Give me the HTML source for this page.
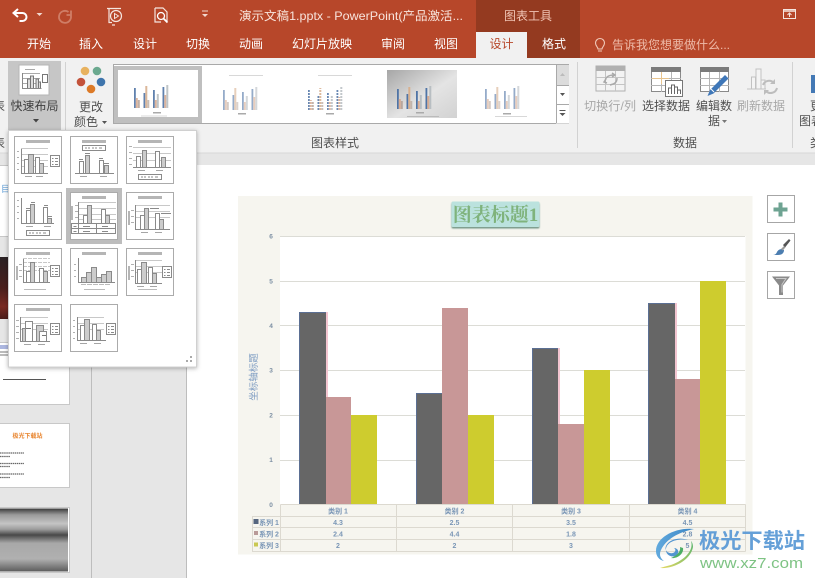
<!DOCTYPE html>
<html lang="zh"><head><meta charset="utf-8"><title>PowerPoint</title>
<style>
html,body{margin:0;padding:0;background:#fff}
body{width:815px;height:578px;overflow:hidden}
svg{display:block}
text{font-family:"Liberation Sans","Noto Sans CJK SC",sans-serif}
.t{font-size:12px;fill:#fff;text-anchor:middle}
.r{font-size:12px;fill:#505050;text-anchor:middle}
.g{font-size:12px;fill:#a8a8a8;text-anchor:middle}
.n{font-size:6.5px;fill:#7b8ea2;font-weight:bold;text-anchor:middle}
.c{font-size:7px;fill:#7a96b6;text-anchor:middle;font-weight:bold}
</style></head><body>
<svg width="815" height="578" viewBox="0 0 815 578" xmlns="http://www.w3.org/2000/svg">
<defs>
<linearGradient id="img4" x1="0" y1="0" x2="1" y2="1"><stop offset="0" stop-color="#a6a6a6"/><stop offset=".55" stop-color="#e4e4e4"/><stop offset="1" stop-color="#d2d2d2"/></linearGradient>
<linearGradient id="gr" x1="0" y1="0" x2="0" y2="1"><stop offset="0" stop-color="#3a3a3a"/><stop offset=".1" stop-color="#9a9a9a"/><stop offset=".24" stop-color="#c4c4c4"/><stop offset=".33" stop-color="#9c9c9c"/><stop offset=".42" stop-color="#484848"/><stop offset=".55" stop-color="#a8a8a8"/><stop offset=".8" stop-color="#b0b0b0"/><stop offset="1" stop-color="#5c5c5c"/></linearGradient>
<linearGradient id="dk" x1="0" y1="0" x2="0" y2="1"><stop offset="0" stop-color="#2a2224"/><stop offset=".5" stop-color="#4a1f1c"/><stop offset=".8" stop-color="#7a2a22"/><stop offset="1" stop-color="#4a1d1a"/></linearGradient>
<linearGradient id="sb" x1="0" y1="0" x2="1" y2="0"><stop offset="0" stop-color="#5aa6dc"/><stop offset="1" stop-color="#2f7fc4"/></linearGradient>
<linearGradient id="sg" x1="0" y1="1" x2="1" y2="0"><stop offset="0" stop-color="#e3d75a"/><stop offset="1" stop-color="#4fb26a"/></linearGradient>
<filter id="sh" x="-10%" y="-10%" width="120%" height="120%"><feDropShadow dx="0" dy="1" stdDeviation="2" flood-color="#000" flood-opacity=".3"/></filter>
<filter id="sh2" x="-10%" y="-20%" width="120%" height="150%"><feDropShadow dx="0" dy="1.5" stdDeviation=".8" flood-color="#3c6e5c" flood-opacity=".7"/></filter>

<g id="tf"><rect x=".5" y=".5" width="47" height="47" fill="#fff" stroke="#ababab"/></g>
<g id="ttl"><rect x="12" y="4" width="24" height="3" fill="#b5b5b5"/></g>
<g id="leg"><rect x="36.500" y="19.500" width="9" height="11" fill="#fff" stroke="#8a8a8a"/><path d="M38 22.500h1.500M41 22.500h3M38 25.500h1.500M41 25.500h3M38 28.500h1.500M41 28.500h3" stroke="#8a8a8a"/></g>
<g id="lb"><rect x="12.500" y="0.500" width="23" height="5" fill="#fff" stroke="#8a8a8a"/><path d="M15 3h2M18 3h2M22 3h2M25 3h2M29 3h3" stroke="#8a8a8a"/></g>
<g id="b4" stroke="#8a8a8a" stroke-width="1"><rect x="0" y="-14" width="4" height="14" fill="#fff"/><rect x="4" y="-19" width="5" height="19" fill="#c8c8c8"/><rect x="11" y="-16" width="4" height="16" fill="#fff"/><rect x="15" y="-10" width="4" height="10" fill="#c8c8c8"/></g>
<g id="grid" stroke="#c8c8c8" fill="none"><path d="M0 .5H27M0 6.500H27M0 12.500H27M0 18.500H27"/></g>
<g id="tk" stroke="#b0b0b0"><path d="M0 .5H2M0 6.500H2M0 12.500H2M0 18.500H2"/></g>
<g id="xl" stroke="#a5a5a5"><path d="M0 .5H7M11 .5H18"/></g>

<g id="m">
<rect x="0" y="-20" width="1.800" height="20" fill="#4f74a6"/><rect x="1.800" y="-10" width="2" height="10" fill="#d9ac92"/><rect x="3.800" y="-8" width="2" height="8" fill="#b9a79d"/>
<rect x="9.500" y="-15" width="1.800" height="15" fill="#4f74a6"/><rect x="11.300" y="-22" width="2" height="22" fill="#d8b08e"/><rect x="13.300" y="-8" width="2" height="8" fill="#c2b5ac"/>
<rect x="19" y="-18" width="1.800" height="18" fill="#4f74a6"/><rect x="20.800" y="-8" width="2" height="8" fill="#d9ac92"/><rect x="22.800" y="-14" width="2" height="14" fill="#b8bec2"/>
<rect x="28.500" y="-21" width="1.800" height="21" fill="#4f74a6"/><rect x="30.300" y="-13" width="2" height="13" fill="#d9ac92"/><rect x="32.300" y="-23" width="2" height="23" fill="#b8bec2"/>
</g>
</defs>

<!-- title bar -->
<rect width="815" height="58" fill="#b7472a"/>
<rect x="476" y="0" width="104" height="58" fill="#943a20"/>
<rect x="476" y="32" width="51" height="26" fill="#f1f1f1"/>
<rect y="58" width="815" height="95" fill="#f1f1f1"/>
<rect y="153" width="815" height="425" fill="#e6e6e6"/>
<rect y="152.500" width="815" height="1" fill="#d8d8d8"/>

<!-- QAT -->
<path d="M18 9l-4.500 4 4.500 4M13.500 13h9a4 4 0 0 1 0 8h-3" fill="none" stroke="#fff" stroke-width="2"/>
<path d="M36.500 13h6l-3 3z" fill="#f2d8cf"/>
<path d="M72 10v4.500h-4.500M71.500 14a6 6 0 1 1-2-2.500" fill="none" stroke="#cf7d66" stroke-width="1.800" transform="translate(-1 .5)"/>
<path d="M107 8.500h14M109 8.500v14h3M115 25h-3" fill="none" stroke="#f5e6e0" stroke-width="1.200"/>
<circle cx="116" cy="16" r="5.500" fill="none" stroke="#f5e6e0" stroke-width="1.200"/><path d="M114.500 13.500l4 2.500-4 2.500z" fill="none" stroke="#f5e6e0"/>
<path d="M155 8h8l4 4v9M155 8v14h6" fill="none" stroke="#f5e6e0" stroke-width="1.200"/>
<circle cx="161" cy="16" r="3.500" fill="none" stroke="#fff" stroke-width="1.300"/><path d="M163.500 18.500l4 4" stroke="#fff" stroke-width="1.800"/>
<path d="M202 11h6" stroke="#f2d8cf"/><path d="M202 14h6l-3 3z" fill="#f2d8cf"/>
<text x="239" y="20" font-size="12" fill="#f8e4dc" textLength="224" lengthAdjust="spacingAndGlyphs">演示文稿1.pptx - PowerPoint(产品激活...</text>
<text x="528" y="20" font-size="12" fill="#f0c4b4" text-anchor="middle">图表工具</text>
<rect x="783.500" y="9.500" width="12" height="9" fill="none" stroke="#f5e6e0"/><path d="M784 11h11" stroke="#f5e6e0" stroke-width="1.500"/><path d="M789.500 17v-4M787.500 15l2-2 2 2" fill="none" stroke="#f5e6e0"/>

<!-- Tabs -->
<text class="t" x="39" y="48">开始</text><text class="t" x="91" y="48">插入</text><text class="t" x="145" y="48">设计</text><text class="t" x="198" y="48">切换</text><text class="t" x="251" y="48">动画</text><text class="t" x="322" y="48">幻灯片放映</text><text class="t" x="393" y="48">审阅</text><text class="t" x="446" y="48">视图</text>
<text x="501.500" y="48" font-size="12" fill="#b7472a" text-anchor="middle">设计</text><text class="t" x="554" y="48">格式</text>
<path d="M598 49c0-2-2.500-3-2.500-6a4.500 4.500 0 0 1 9 0c0 3-2.500 4-2.500 6zM598 51h4" fill="none" stroke="#f0c8b8" stroke-width="1.100"/>
<text x="612" y="49" font-size="12" fill="#eebba9" textLength="118" lengthAdjust="spacingAndGlyphs">告诉我您想要做什么...</text>

<!-- Ribbon left -->
<text x="-7" y="110" class="r" style="text-anchor:start">表</text>
<text x="-7" y="147" class="r" style="text-anchor:start">表</text>
<rect x="8" y="61" width="53" height="69" fill="#c6c6c6"/>
<rect x="19" y="65" width="30" height="30" fill="#fff" stroke="#b5b5b5"/>
<path d="M25 69.500h10M22 73.500h18M22 78.500h18M22 83.500h18" stroke="#aaa"/>
<path d="M22.500 73v15.500h19" fill="none" stroke="#888"/>
<path d="M27.500 88v-9h3v9M30.500 88v-12h3v12M36 88v-9h2.500v9M38.500 88v-6h2v6" fill="#ddd" stroke="#777"/>
<rect x="42.500" y="74.500" width="5" height="8" fill="#fff" stroke="#777"/>
<text x="34.500" y="110" class="r" style="fill:#404040">快速布局</text>
<path d="M33 119h6l-3 3.500z" fill="#444"/>
<path d="M65.500 62V150" stroke="#d2d2d2"/>
<circle cx="85" cy="71" r="4.300" fill="#e8b25f"/><circle cx="97" cy="71" r="4.300" fill="#6ba98f"/><circle cx="81" cy="82" r="4.300" fill="#c3523a"/><circle cx="101" cy="82" r="4.300" fill="#3f75ac"/><circle cx="91" cy="89" r="4.300" fill="#dc7a27"/>
<text class="r" x="91" y="111">更改</text><text class="r" x="86" y="126">颜色</text><path d="M102 121h5l-2.500 3z" fill="#555"/>

<!-- Gallery -->
<rect x="113.500" y="64.500" width="455" height="59" fill="#fff" stroke="#a9a9a9"/>
<rect x="114" y="66" width="88" height="57" fill="#bfbfbf"/><rect x="118" y="70" width="80" height="47" fill="#fff"/>
<rect x="387" y="70" width="70" height="48" fill="url(#img4)"/>
<g opacity=".9"><use href="#m" x="134" y="108"/></g>
<g opacity=".6"><use href="#m" x="223" y="110"/></g>
<g opacity=".85"><use href="#m" x="308" y="110"/></g>
<path d="M326 86V110" stroke="#fff" stroke-width="38" stroke-dasharray="1 2"/>
<use href="#m" x="397" y="109"/>
<g opacity=".6"><use href="#m" x="485" y="109"/></g>
<g fill="#aaa"><rect x="153" y="112" width="8" height="1.500"/><rect x="238" y="113" width="8" height="1.500"/><rect x="326" y="113" width="8" height="1.500"/><rect x="416" y="112" width="8" height="1.500"/><rect x="503" y="113" width="8" height="1.500"/></g>
<g fill="#d8d8d8"><rect x="141" y="115.500" width="26" height="1"/><rect x="229" y="75" width="34" height="1"/><rect x="318" y="75" width="34" height="1"/><rect x="407" y="116" width="32" height="1" fill="#bbb"/><rect x="495" y="116" width="32" height="1"/></g>
<rect x="556" y="65" width="13" height="20" fill="#dcdcdc"/><rect x="556" y="85.500" width="13" height="38" fill="#fff"/>
<path d="M556.500 65V123M556 85.500H569M556 104.500H569" stroke="#a9a9a9"/>
<path d="M560 76h5l-2.500-3z" fill="#bbb"/><path d="M560 93h5l-2.500 3z" fill="#555"/><path d="M559.500 110.500h6" stroke="#555"/><path d="M559.500 113h6l-3 3z" fill="#555"/>
<text class="r" x="335" y="147">图表样式</text>
<path d="M577.500 62V148M792.500 62V148" stroke="#d2d2d2"/>

<!-- Data group -->
<rect x="596" y="66" width="29" height="25" fill="#f3f3f3" stroke="#b0b0b0"/><rect x="596" y="66" width="29" height="5" fill="#b0b0b0"/>
<path d="M596 77.500h29M596 84.500h29M605.500 71v20M615.500 71v20" stroke="#c4c4c4"/>
<path d="M605 82c0-5 4-7 9-7M612 73l3 2-3 2M617 78c0 5-3 6-7 7M606 79l-2 3 3 1" fill="none" stroke="#a9a9a9" stroke-width="1.500"/>
<rect x="651.500" y="67.500" width="29" height="24" fill="#fff" stroke="#8a8a8a"/><rect x="651" y="67" width="30" height="5" fill="#7b7b7b"/>
<path d="M651 78.500h30M651 85.500h30M661.500 72v20M671.500 72v20" stroke="#b5b5b5"/><path d="M652 78.500h17M661.500 72v12" stroke="#e8c48e"/>
<rect x="665.500" y="80.500" width="17" height="16" fill="#fff" stroke="#777"/><path d="M668.500 94v-6h3v6M671.500 94v-9h3v9M674.500 94v-7h3v7M677.500 94v-4h3v4" fill="none" stroke="#666"/>
<rect x="700.500" y="67.500" width="28" height="24" fill="#fff" stroke="#8a8a8a"/><rect x="700" y="67" width="29" height="5" fill="#7b7b7b"/>
<path d="M700 78.500h29M700 85.500h29M709.500 72v20M719.500 72v20" stroke="#b5b5b5"/>
<path d="M710 90l15-15 3.500 3.500-15 15-6 2.500z" fill="#3f77b8"/><path d="M711 89l3 3" stroke="#fff"/>
<path d="M751.500 89v-12h4v12M756 89V69h5v20M761 89v-9h4v9M747 89h19" fill="#f4f4f4" stroke="#c2c2c2"/>
<path d="M763 85a6.500 6.500 0 0 1 11-2M777 88a6.500 6.500 0 0 1-11 3" fill="none" stroke="#bdbdbd" stroke-width="2"/>
<path d="M775 79v5h-5zM764 95v-5h5z" fill="#bdbdbd"/>
<text x="584" y="110" font-size="12" fill="#a8a8a8" textLength="52" lengthAdjust="spacingAndGlyphs">切换行/列</text>
<text x="642" y="110" font-size="12" fill="#505050">选择数据</text>
<text x="696" y="110" font-size="12" fill="#505050">编辑数</text>
<text x="708" y="125" font-size="12" fill="#505050">据</text><path d="M722 120h5l-2.500 3z" fill="#777"/>
<text x="737" y="110" font-size="12" fill="#a8a8a8">刷新数据</text>
<text class="r" x="685" y="147">数据</text>
<rect x="811" y="75" width="4" height="18" fill="#4479b5"/>
<text x="810" y="110" font-size="12" fill="#505050">更</text>
<text x="799" y="125" font-size="12" fill="#505050">图表</text>
<text x="810" y="147" font-size="12" fill="#505050">类</text>

<!-- Left panes -->
<path d="M91.500 153V578M186.500 153V578" stroke="#bdbdbd"/>
<rect x="187" y="165" width="628" height="413" fill="#fff"/>
<g fill="#fff" stroke="#c8c8c8">
<rect x="-2" y="165.500" width="71.500" height="71"/>
<rect x="-2" y="342.500" width="71.500" height="62"/>
<rect x="-2" y="423.500" width="71.500" height="64"/>
<rect x="-2" y="507.500" width="71.500" height="65"/>
</g>
<rect x="-2" y="257" width="71" height="62" fill="url(#dk)"/>
<rect x="0" y="508.500" width="68" height="63" fill="url(#gr)"/>
<text x="1" y="192" font-size="9" fill="#5b9bd5">目</text>
<path d="M0 346h8M0 348h8" stroke="#5a6fc0"/>
<path d="M0 352h8M0 355h8" stroke="#777"/>
<path d="M3 379.500H46" stroke="#555"/>
<text x="27.500" y="438" font-size="6" font-weight="bold" fill="#e8852f" text-anchor="middle">极光下载站</text>
<path d="M0 453h24M0 456.500h10M0 463.500h24M0 466.500h10M0 474h24M0 477.500h10" stroke="#666" stroke-width="1.200" stroke-dasharray="1.500 .6"/>

<!-- Chart -->
<rect x="238" y="196" width="514.500" height="358.500" fill="#f6f5ef"/>
<rect x="280" y="236" width="465.500" height="268.500" fill="#fff"/>
<path d="M280 236.500H745M280 281.500H745M280 325.500H745M280 370.500H745M280 415.500H745M280 460.500H745" stroke="#dcdcd6"/>
<g>
<rect x="326" y="312" width="2" height="193" fill="#f3c5d0"/><rect x="442" y="393" width="1" height="112" fill="#f3c5d0"/><rect x="558" y="348" width="2" height="157" fill="#f3c5d0"/><rect x="675" y="303" width="2" height="202" fill="#f3c5d0"/>
<g fill="#666"><rect x="299" y="312" width="27" height="193"/><rect x="416" y="393" width="26" height="112"/><rect x="532" y="348" width="26" height="157"/><rect x="648" y="303" width="27" height="202"/></g>
<path d="M299.500 505V312.500H326M416.500 505V393.500H442M532.500 505V348.500H558M648.500 505V303.500H675" fill="none" stroke="#5b6f93"/>
<g fill="#c89797"><rect x="326" y="397" width="25" height="108"/><rect x="442" y="308" width="26" height="197"/><rect x="558" y="424" width="26" height="81"/><rect x="675" y="379" width="25" height="126"/></g>
<g fill="#cecc2e"><rect x="351" y="415" width="26" height="90"/><rect x="468" y="415" width="26" height="90"/><rect x="584" y="370" width="26" height="135"/><rect x="700" y="281" width="26" height="224"/></g>
</g>
<g><text class="n" x="271" y="238.500">6</text><text class="n" x="271" y="283.500">5</text><text class="n" x="271" y="328">4</text><text class="n" x="271" y="372.500">3</text><text class="n" x="271" y="417.500">2</text><text class="n" x="271" y="462">1</text><text class="n" x="271" y="507">0</text></g>
<text transform="translate(257 377) rotate(-90)" font-size="9.500" fill="#7d9cc2" text-anchor="middle">坐标轴标题</text>
<rect x="451.500" y="201.500" width="88" height="25.500" rx="1.500" fill="#bbe2de" filter="url(#sh2)"/>
<text x="495.500" y="221" font-size="19" font-weight="bold" fill="#7fb37c" text-anchor="middle" style="font-family:'Liberation Serif','Noto Serif CJK SC',serif">图表标题1</text>
<!-- table -->
<g fill="none" stroke="#dcd9d0"><path d="M280.500 504.500H745.500M252 516.500H745.500M252 527.500H745.500M252 539.500H745.500M252 551.500H745.500M280.500 504.500V551.500M396.500 504.500V551.500M512.500 504.500V551.500M629.500 504.500V551.500M745.500 504.500V551.500M252.500 516.500V551.500"/></g>
<g>
<text class="c" x="338" y="513.500">类别 1</text><text class="c" x="454.500" y="513.500">类别 2</text><text class="c" x="571" y="513.500">类别 3</text><text class="c" x="687.500" y="513.500">类别 4</text>
<text class="c" x="338" y="525">4.3</text><text class="c" x="454.500" y="525">2.5</text><text class="c" x="571" y="525">3.5</text><text class="c" x="687.500" y="525">4.5</text>
<text class="c" x="338" y="536.500">2.4</text><text class="c" x="454.500" y="536.500">4.4</text><text class="c" x="571" y="536.500">1.8</text><text class="c" x="687.500" y="536.500">2.8</text>
<text class="c" x="338" y="548">2</text><text class="c" x="454.500" y="548">2</text><text class="c" x="571" y="548">3</text><text class="c" x="687.500" y="548">5</text>
<rect x="253.500" y="519" width="5" height="5" fill="#55657e"/><rect x="254" y="531" width="4" height="4" fill="#b99a98"/><rect x="254" y="542.500" width="4" height="4" fill="#c9c852"/>
<text class="c" x="269" y="525">系列 1</text><text class="c" x="269" y="536.500">系列 2</text><text class="c" x="269" y="548">系列 3</text>
</g>

<!-- side buttons -->
<g fill="#fff" stroke="#a6a6a6"><rect x="767.500" y="195.500" width="27" height="27"/><rect x="767.500" y="233.500" width="27" height="27"/><rect x="767.500" y="271.500" width="27" height="27"/></g>
<path d="M778.500 202.500h4v5h5v4h-5v5h-4v-5h-5v-4h5z" fill="#6ea392"/>
<path d="M783 245l6-6 1.500 1.500-5.500 7z" fill="#555"/>
<path d="M773 255c2 0 3-1 4-3 1-2 3-3 5-3l2 1c0 3-2 5-6 5z" fill="#4b7db0"/>
<path d="M781 249l3-3 1.500 1.500-3 3z" fill="#9a9a9a"/>
<path d="M772 276.500h18l-7 9v9.500h-4v-9.500z" fill="#8a8a8a"/><path d="M776 278.500h10l-4 6v8" fill="none" stroke="#c9c9c9"/>

<!-- popup -->
<rect x="8.500" y="130.500" width="188" height="236.500" fill="#fff" stroke="#d0d0d0" filter="url(#sh)"/>
<rect x="66" y="188" width="56" height="56" fill="#bdbdbd"/>
<g fill="#aaa"><rect x="186" y="360" width="2" height="2"/><rect x="190" y="360" width="2" height="2"/><rect x="190" y="356" width="2" height="2"/></g>

<g shape-rendering="crispEdges">
<!-- T1 -->
<g transform="translate(14 136)"><use href="#tf"/><use href="#ttl"/><use href="#grid" x="7" y="12"/><use href="#tk" x="3" y="15"/><path d="M7.500 13V37.500H34" fill="none" stroke="#8a8a8a"/><use href="#b4" x="10.500" y="37.500"/><use href="#xl" x="11" y="40"/><use href="#leg"/></g>
<!-- T2 -->
<g transform="translate(70 136)"><use href="#tf"/><use href="#ttl"/><use href="#lb" y="9"/><path d="M5 37.500H44" stroke="#8a8a8a"/><path d="M9 23.500h4M15 17.500h5M29 22.500h4M34 27.500h5" stroke="#8a8a8a"/><g stroke="#8a8a8a"><rect x="9.500" y="25.500" width="4" height="12" fill="#fff"/><rect x="15.500" y="19.500" width="4" height="18" fill="#ccc"/><rect x="29.500" y="24.500" width="4" height="13" fill="#fff"/><rect x="34.500" y="29.500" width="4" height="8" fill="#ccc"/></g><path d="M10 40.500h7M30 40.500h7" stroke="#a5a5a5"/></g>
<!-- T3 -->
<g transform="translate(126 136)"><use href="#tf"/><use href="#ttl"/><path d="M7 11.500H45M7 17.500H45M7 24.500H45" stroke="#c8c8c8"/><path d="M3 10.500h3M3 16.500h3M3 22.500h3M3 28.500h3" stroke="#b0b0b0"/><path d="M7 31.500H45" stroke="#8a8a8a"/><g stroke="#8a8a8a"><rect x="10.500" y="20.500" width="4" height="11" fill="#fff"/><rect x="16.500" y="14.500" width="4" height="17" fill="#ccc"/><rect x="29.500" y="15.500" width="4" height="16" fill="#fff"/><rect x="35.500" y="21.500" width="4" height="10" fill="#ccc"/></g><path d="M12 34.500h7M30 34.500h7" stroke="#a5a5a5"/><use href="#lb" y="38"/></g>
<!-- T4 -->
<g transform="translate(14 192)"><use href="#tf"/><path d="M7.500 6V31.500H40" fill="none" stroke="#8a8a8a"/><path d="M3 8.500h2M3 14.500h2M3 20.500h2M3 26.500h2" stroke="#b0b0b0"/><g stroke="#8a8a8a"><rect x="12.500" y="18.500" width="4" height="13" fill="#fff"/><rect x="16.500" y="12.500" width="4" height="19" fill="#ccc"/><rect x="29.500" y="15.500" width="4" height="16" fill="#fff"/><rect x="33.500" y="26.500" width="4" height="5" fill="#ccc"/></g><path d="M12 16.500h4M17 10.500h4M30 13.500h4M34 24.500h4" stroke="#8a8a8a"/><path d="M12 34.500h7M30 34.500h7" stroke="#a5a5a5"/><use href="#lb" y="38"/></g>
<!-- T5 -->
<g transform="translate(70 192)"><use href="#tf"/><use href="#ttl"/><rect x="1" y="14" width="2" height="14" fill="#b5b5b5"/><path d="M8 10.500H46M8 16.500H46M8 22.500H46M8 27.500H46" stroke="#c8c8c8"/><path d="M5 13.500h3M5 19.500h3M5 25.500h3" stroke="#b0b0b0"/><path d="M8.500 10V31.500H46" fill="none" stroke="#8a8a8a"/><g stroke="#8a8a8a"><rect x="13.500" y="23.500" width="4" height="8" fill="#fff"/><rect x="17.500" y="13.500" width="4" height="18" fill="#ccc"/><rect x="31.500" y="17.500" width="4" height="14" fill="#fff"/><rect x="35.500" y="23.500" width="4" height="8" fill="#ccc"/></g><rect x="1.500" y="31.500" width="44" height="10" fill="#fff" stroke="#8a8a8a"/><path d="M1.500 36.500h44M8.500 31.500v10M26.500 31.500v10" stroke="#8a8a8a"/><path d="M3.500 34.500h3M3.500 39.500h3M13 34.500h7M13 39.500h7M32 34.500h6M32 39.500h6" stroke="#8a8a8a"/></g>
<!-- T6 -->
<g transform="translate(126 192)"><use href="#tf"/><use href="#ttl"/><rect x="2" y="19" width="2" height="14" fill="#b5b5b5"/><path d="M9 13.500H44M9 19.500H44M9 25.500H44" stroke="#c8c8c8"/><path d="M5 18.500h3M5 24.500h3M5 30.500h3" stroke="#b0b0b0"/><path d="M9.500 13V37.500H44" fill="none" stroke="#8a8a8a"/><g stroke="#8a8a8a"><rect x="14.500" y="23.500" width="4" height="14" fill="#fff"/><rect x="18.500" y="16.500" width="4" height="21" fill="#ccc"/><rect x="29.500" y="21.500" width="4" height="16" fill="#fff"/><rect x="33.500" y="27.500" width="4" height="10" fill="#ccc"/></g><path d="M24 16.500h9M35 21.500h10" stroke="#8a8a8a"/><path d="M15 40.500h7M29 40.500h7" stroke="#a5a5a5"/></g>
<!-- T7 -->
<g transform="translate(14 248)"><use href="#tf"/><use href="#ttl"/><rect x="2" y="18" width="2" height="14" fill="#b5b5b5"/><path d="M9 10.500H36M9 14.500H36M9 18.500H36M9 22.500H36" stroke="#c8c8c8" stroke-dasharray="4 1"/><path d="M5 16.500h3M5 22.500h3M5 28.500h3" stroke="#b0b0b0"/><path d="M9.500 11V34.500H36" fill="none" stroke="#8a8a8a"/><g stroke="#8a8a8a"><rect x="12.500" y="23.500" width="4" height="11" fill="#fff"/><rect x="16.500" y="14.500" width="4" height="20" fill="#ccc"/><rect x="25.500" y="20.500" width="4" height="14" fill="#fff"/><rect x="29.500" y="23.500" width="4" height="11" fill="#ccc"/></g><use href="#leg" x="0" y="-2"/><rect x="10" y="41" width="22" height="1" fill="#bbb"/></g>
<!-- T8 -->
<g transform="translate(70 248)"><use href="#tf"/><use href="#ttl"/><path d="M8.500 10V34.500H45" fill="none" stroke="#8a8a8a"/><path d="M4 16.500h2M4 22.500h2M4 28.500h2" stroke="#b0b0b0"/><g stroke="#8a8a8a"><rect x="11.500" y="29.500" width="5" height="5" fill="#ccc"/><rect x="16.500" y="24.500" width="5" height="10" fill="#ccc"/><rect x="21.500" y="19.500" width="5" height="15" fill="#ccc"/><rect x="26.500" y="29.500" width="5" height="5" fill="#ccc"/><rect x="31.500" y="26.500" width="5" height="8" fill="#ccc"/><rect x="36.500" y="23.500" width="5" height="11" fill="#ccc"/></g><rect x="14" y="41" width="21" height="1" fill="#bbb"/><path d="M11 36.500H41" stroke="#bbb" stroke-dasharray="5 1"/></g>
<!-- T9 -->
<g transform="translate(126 248)"><use href="#tf"/><use href="#ttl"/><rect x="2" y="18" width="2" height="14" fill="#b5b5b5"/><path d="M9 12.500H36M9 18.500H36M9 24.500H36" stroke="#c8c8c8"/><path d="M5 16.500h3M5 22.500h3M5 28.500h3" stroke="#b0b0b0"/><path d="M9.500 12V35.500H36" fill="none" stroke="#8a8a8a"/><g stroke="#8a8a8a"><rect x="11.500" y="21.500" width="4" height="14" fill="#fff"/><rect x="15.500" y="14.500" width="5" height="21" fill="#ccc"/><rect x="22.500" y="19.500" width="4" height="16" fill="#fff"/><rect x="26.500" y="25.500" width="4" height="10" fill="#ccc"/></g><use href="#leg" x="0" y="-1"/><rect x="12" y="41" width="19" height="1" fill="#bbb"/><path d="M11 38.500h7M24 38.500h7" stroke="#a5a5a5"/></g>
<!-- T10 -->
<g transform="translate(14 304)"><use href="#tf"/><use href="#ttl"/><path d="M6 13.500H34M6 19.500H34M6 25.500H34" stroke="#c8c8c8"/><path d="M2 16.500h3M2 22.500h3M2 28.500h3M2 34.500h3" stroke="#b0b0b0"/><path d="M6.500 13V37.500H36" fill="none" stroke="#8a8a8a"/><g stroke="#8a8a8a"><rect x="8.500" y="24.500" width="3" height="13" fill="#ccc"/><rect x="11.500" y="17.500" width="7" height="20" fill="#fff"/><rect x="22.500" y="21.500" width="7" height="16" fill="#ccc"/><rect x="25.500" y="27.500" width="7" height="10" fill="#fff"/></g><path d="M12 24.500h5M28 31.500h4" stroke="#777"/><use href="#leg"/><path d="M10 40.500h7M24 40.500h7" stroke="#a5a5a5"/></g>
<!-- T11 -->
<g transform="translate(70 304)"><use href="#tf"/><path d="M7 13.500H34M7 19.500H34M7 25.500H34" stroke="#c8c8c8"/><path d="M3 16.500h2M3 22.500h2M3 28.500h2M3 34.500h2" stroke="#b0b0b0"/><path d="M7.500 13V36.500H36" fill="none" stroke="#8a8a8a"/><g stroke="#8a8a8a"><rect x="10.500" y="21.500" width="4" height="15" fill="#fff"/><rect x="14.500" y="15.500" width="5" height="21" fill="#ccc"/><rect x="22.500" y="20.500" width="4" height="16" fill="#fff"/><rect x="26.500" y="26.500" width="4" height="10" fill="#ccc"/></g><use href="#leg"/><path d="M10 39.500h7M24 39.500h7" stroke="#a5a5a5"/></g>
</g>

<!-- watermark -->
<g opacity=".95">
<path d="M694 529c-18-2-38 8-38 22 0 5 3 9 8 10-4-3-5-7-3-11 5-11 18-18 33-21z" fill="url(#sb)"/>
<path d="M688 540c-8-3-19-1-22 6-2 5 3 8 7 7 3-1 3-4 1-5 3 0 6 3 3 7-4 3-10 1-11-4-1-8 9-13 22-11z" fill="#4a90cf"/>
<path d="M691 541c3 9-6 19-20 24-4 1-8 2-11 3 15 1 31-9 33-21 0-3-1-5-2-6z" fill="url(#sg)"/>
<path d="M680 547c1 5-4 9-9 11 6 1 13-4 12-10z" fill="#45ab5f"/>
<text x="699" y="548" font-size="21" font-weight="bold" fill="#5d9bd6" textLength="106" lengthAdjust="spacingAndGlyphs">极光下载站</text>
<text x="700" y="568" font-size="15" fill="#78c07e" textLength="103" lengthAdjust="spacingAndGlyphs">www.xz7.com</text>
</g>
</svg>
</body></html>
